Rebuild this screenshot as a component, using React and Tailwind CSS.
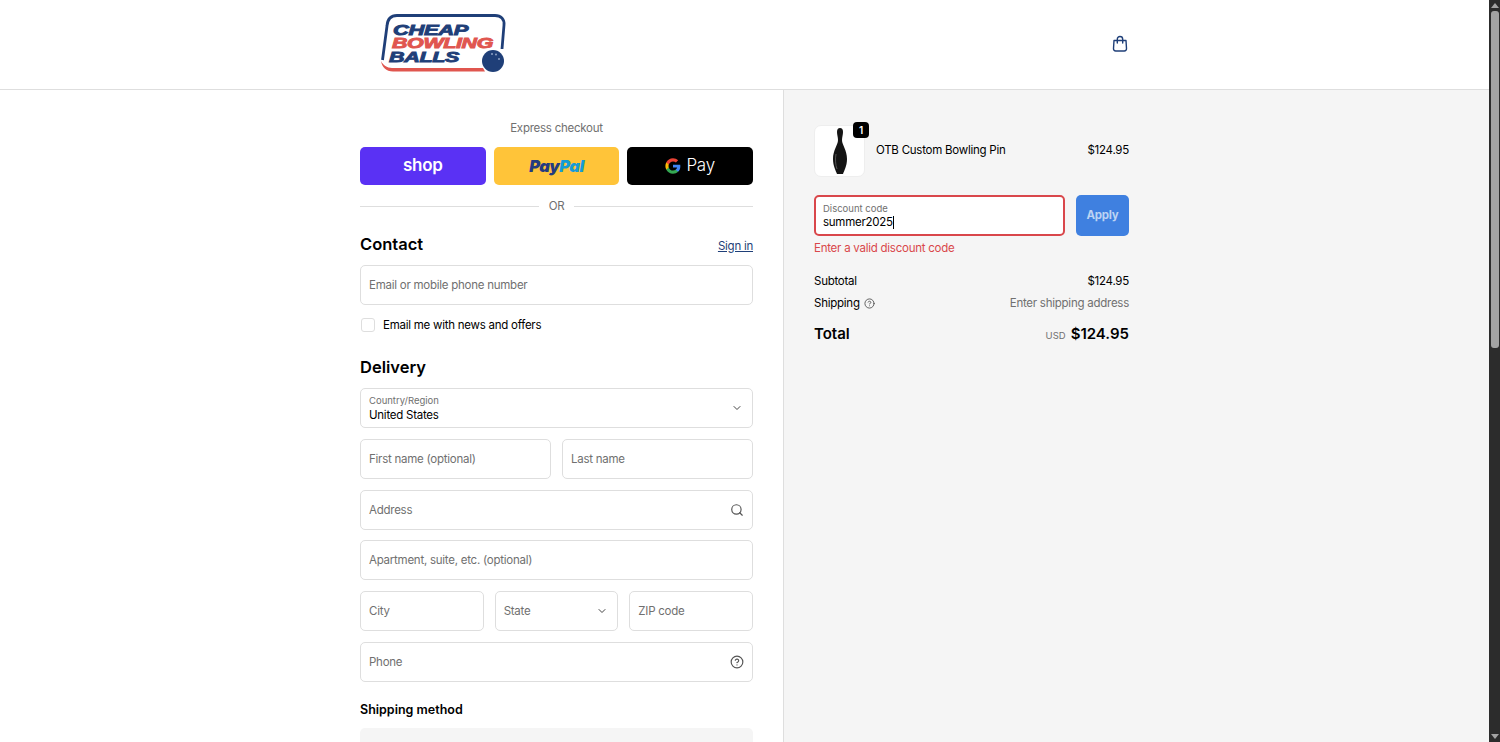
import React from "react";
import { ChevronDown, Search, CircleHelp } from "lucide-react";

const Field = ({ label, className = "", children }) => (
  <div className={`h-10 border border-[#dedede] rounded-[5px] bg-white flex items-center justify-between pl-2 pr-[8px] text-[#707070] ${className}`}>
    <span className="pt-[2px]">{label}</span>
    {children}
  </div>
);

const Logo = () => (
  <svg width="128" height="60" viewBox="0 0 128 60" className="block">
    <path d="M2 47 C3 53 7 57.500 14 57.500 L106 57.500 L104 54 L13 54 C8 54 4 51 2 47 Z" fill="#e0564f" />
    <path d="M3.500 46 L8 12 C8.500 5 12 1.500 18 1.500 L116 1.500 C122 1.500 125.500 5 125 11 L123 35" fill="none" stroke="#1f3f78" strokeWidth="2.800" />
    <g fontFamily="Liberation Sans" fontStyle="italic" fontWeight="700" fontSize="15" strokeWidth="0.900">
      <text x="14" y="21" textLength="75" lengthAdjust="spacingAndGlyphs" fill="#1f3f78" stroke="#1f3f78">CHEAP</text>
      <text x="13" y="34" textLength="101" lengthAdjust="spacingAndGlyphs" fill="#e0564f" stroke="#e0564f">BOWLING</text>
      <text x="10" y="48" textLength="70" lengthAdjust="spacingAndGlyphs" fill="#1f3f78" stroke="#1f3f78">BALLS</text>
    </g>
    <circle cx="114" cy="47" r="11" fill="#1f3f78" />
    <circle cx="113" cy="40" r="1" fill="#8fa3c4" />
    <circle cx="117" cy="40.500" r="1" fill="#8fa3c4" />
    <circle cx="120" cy="45" r="1" fill="#8fa3c4" />
  </svg>
);

const BagIcon = () => (
  <svg width="18" height="18" viewBox="0 0 18 18" fill="none" stroke="#1f3f78" strokeWidth="1.400" className="-mt-[1px]">
    <path d="M3 5.500 H15 L15.500 13.500 C15.600 15 14.700 16 13.300 16 H4.700 C3.300 16 2.400 15 2.500 13.500 Z" strokeLinejoin="round" />
    <path d="M6.300 8 V4.200 C6.300 2.600 7.400 1.500 9 1.500 C10.600 1.500 11.700 2.600 11.700 4.200 V8" strokeLinecap="round" />
  </svg>
);

const GoogleG = () => (
  <svg width="16" height="16" viewBox="0 0 24 24">
    <path fill="#4285F4" d="M23 12.300c0-.8-.1-1.600-.2-2.300H12v4.400h6.200c-.3 1.400-1.100 2.600-2.300 3.400v2.900h3.700c2.200-2 3.400-5 3.400-8.400z" />
    <path fill="#34A853" d="M12 23.500c3.100 0 5.700-1 7.600-2.800l-3.700-2.900c-1 .7-2.300 1.100-3.900 1.100-3 0-5.500-2-6.400-4.700H1.800v3C3.700 21 7.500 23.500 12 23.500z" />
    <path fill="#FBBC05" d="M5.600 14.200c-.5-1.400-.5-3 0-4.400v-3H1.800c-1.600 3.200-1.600 7.200 0 10.400z" />
    <path fill="#EA4335" d="M12 5.100c1.700 0 3.200.6 4.400 1.700l3.300-3.300C17.700 1.600 15.100.5 12 .5 7.500.5 3.700 3 1.800 6.800l3.800 3c.9-2.700 3.400-4.700 6.400-4.700z" />
  </svg>
);

const Pin = () => (
  <svg width="18" height="48" viewBox="0 0 18 48">
    <path d="M9 1 C11 1 12 2.500 12 5 C12 8 11 10 11 13 C11 18 16 23 16 32 C16 39 13 44 12 47 H6 C5 44 2 39 2 32 C2 23 7 18 7 13 C7 10 6 8 6 5 C6 2.500 7 1 9 1 Z" fill="#141414" />
    <path d="M5 27 C4 32 4.500 38 6 42" stroke="#555" strokeWidth="1" fill="none" />
  </svg>
);

export default function App() {
  return (
    <div className="h-[742px] overflow-hidden flex bg-white font-['Inter',sans-serif] text-[11.500px] tracking-[-0.25px] text-black">
      <div className="flex-1 min-w-0 flex flex-col">
        <header className="h-[90px] shrink-0 border-b border-[#dedede] flex items-center">
          <div className="w-[1130px] -mt-[1px] flex items-center justify-between pl-[379px] pr-[1px]">
            <Logo />
            <BagIcon />
          </div>
        </header>

        <div className="flex-1 min-h-0 flex overflow-hidden">
          <main className="w-[784px] shrink-0 border-r border-[#dedede] pl-[360px] pr-[30px] pt-[30px]">
            <p className="text-center text-[#707070] leading-[16px]">Express checkout</p>
            <div className="mt-[11px] grid grid-cols-3 gap-2">
              <div className="h-[38px] rounded-[5px] bg-[#5a31f4] flex items-center justify-center text-white text-[17px] font-semibold">shop</div>
              <div className="h-[38px] rounded-[5px] bg-[#ffc439] flex items-center justify-center text-[16.500px] font-black italic tracking-[-0.5px]">
                <span className="text-[#253b80]">Pay</span>
                <span className="text-[#179bd7]">Pal</span>
              </div>
              <div className="h-[38px] rounded-[5px] bg-black flex items-center justify-center gap-[5px] text-white text-[17px] font-light">
                <GoogleG />
                <span>Pay</span>
              </div>
            </div>
            <div className="mt-[13px] flex items-center gap-[10px] text-[#707070] leading-[16px]">
              <div className="flex-1 h-px bg-[#dedede]" />
              <span>OR</span>
              <div className="flex-1 h-px bg-[#dedede]" />
            </div>

            <div className="mt-[19px] flex items-center justify-between h-[22px]">
              <h2 className="text-[16.500px] font-semibold tracking-normal">Contact</h2>
              <a className="pt-[5px] text-[#1f3f78] underline">Sign in</a>
            </div>
            <Field label="Email or mobile phone number" className="mt-[10px]" />
            <label className="mt-[12px] flex items-center gap-[8px] pl-[1px] h-[16px]">
              <span className="w-[14px] h-[14px] border border-[#dedede] rounded-[3px] bg-white" />
              <span className="pt-[1px]">Email me with news and offers</span>
            </label>

            <h2 className="mt-[23px] text-[16.500px] font-semibold tracking-normal leading-[22px]">Delivery</h2>
            <div className="mt-[10px] h-10 border border-[#dedede] rounded-[5px] flex items-center justify-between pl-2 pr-[9px]">
              <div>
                <div className="text-[9.500px] tracking-normal leading-[13px] text-[#707070]">Country/Region</div>
                <div className="leading-[16px]">United States</div>
              </div>
              <ChevronDown size={12} color="#444" />
            </div>
            <div className="mt-[11px] flex gap-[11px]">
              <Field label="First name (optional)" className="flex-1" />
              <Field label="Last name" className="flex-1" />
            </div>
            <Field label="Address" className="mt-[11px]">
              <Search size={14} color="#555" />
            </Field>
            <Field label="Apartment, suite, etc. (optional)" className="mt-[10px]" />
            <div className="mt-[11px] grid grid-cols-3 gap-[11px]">
              <Field label="City" />
              <Field label="State">
                <ChevronDown size={12} color="#444" className="mr-[1px]" />
              </Field>
              <Field label="ZIP code" />
            </div>
            <Field label="Phone" className="mt-[11px]">
              <CircleHelp size={14} color="#555" />
            </Field>

            <h3 className="mt-[19px] text-[12.500px] font-semibold tracking-normal leading-[18px]">Shipping method</h3>
            <div className="mt-[9px] h-[60px] rounded-[5px] bg-[#f5f5f5]" />
          </main>

          <aside className="flex-1 bg-[#f5f5f5] pl-[30px] pt-[35px]">
            <div className="w-[315px]">
              <div className="flex items-center justify-between">
                <div className="flex items-center gap-[11px]">
                  <div className="relative w-[51px] h-[52px] bg-white rounded-[7px] border border-[#eeeeee] flex items-center justify-center">
                    <Pin />
                    <span className="absolute -top-[4px] -right-[5px] w-4 h-4 rounded-[4px] bg-black text-white text-[10px] font-semibold flex items-center justify-center">1</span>
                  </div>
                  <span>OTB Custom Bowling Pin</span>
                </div>
                <span>$124.95</span>
              </div>

              <div className="mt-[18px] flex gap-[11px]">
                <div className="flex-1 h-[41px] border-2 border-[#d9474b] rounded-[5px] bg-white pl-[7px] flex flex-col justify-center">
                  <div className="text-[9.500px] tracking-normal leading-[13px] text-[#707070]">Discount code</div>
                  <div className="leading-[15px] flex items-center">
                    summer2025<span className="w-px h-[13px] bg-black" />
                  </div>
                </div>
                <div className="w-[53px] h-[41px] rounded-[5px] bg-[#3f80e0] text-[#bcd3f3] font-bold flex items-center justify-center">Apply</div>
              </div>
              <p className="mt-[4px] text-[#d9474b] leading-[16px]">Enter a valid discount code</p>

              <div className="mt-[17px] flex justify-between leading-[16px]">
                <span>Subtotal</span>
                <span>$124.95</span>
              </div>
              <div className="mt-[6px] flex justify-between leading-[16px]">
                <span className="flex items-center gap-[4px]">
                  Shipping <CircleHelp size={11} color="#555" />
                </span>
                <span className="text-[#707070]">Enter shipping address</span>
              </div>
              <div className="mt-[12px] flex items-center justify-between h-[22px]">
                <span className="text-[15px] font-semibold tracking-normal">Total</span>
                <span className="flex items-baseline gap-[5px]">
                  <span className="text-[9.500px] tracking-normal text-[#707070]">USD</span>
                  <span className="text-[15px] font-semibold tracking-normal">$124.95</span>
                </span>
              </div>
            </div>
          </aside>
        </div>
      </div>

      <div className="w-[11px] shrink-0 bg-[#2c2c2c] flex flex-col items-center">
        <div className="mt-[3px] w-0 h-0 border-x-[4px] border-x-transparent border-b-[5px] border-b-[#a3a3a3]" />
        <div className="mt-[3px] w-[8px] h-[337px] rounded-[3px] bg-[#a3a3a3]" />
        <div className="mt-auto mb-[3px] w-0 h-0 border-x-[4px] border-x-transparent border-t-[5px] border-t-[#a3a3a3]" />
      </div>
    </div>
  );
}
